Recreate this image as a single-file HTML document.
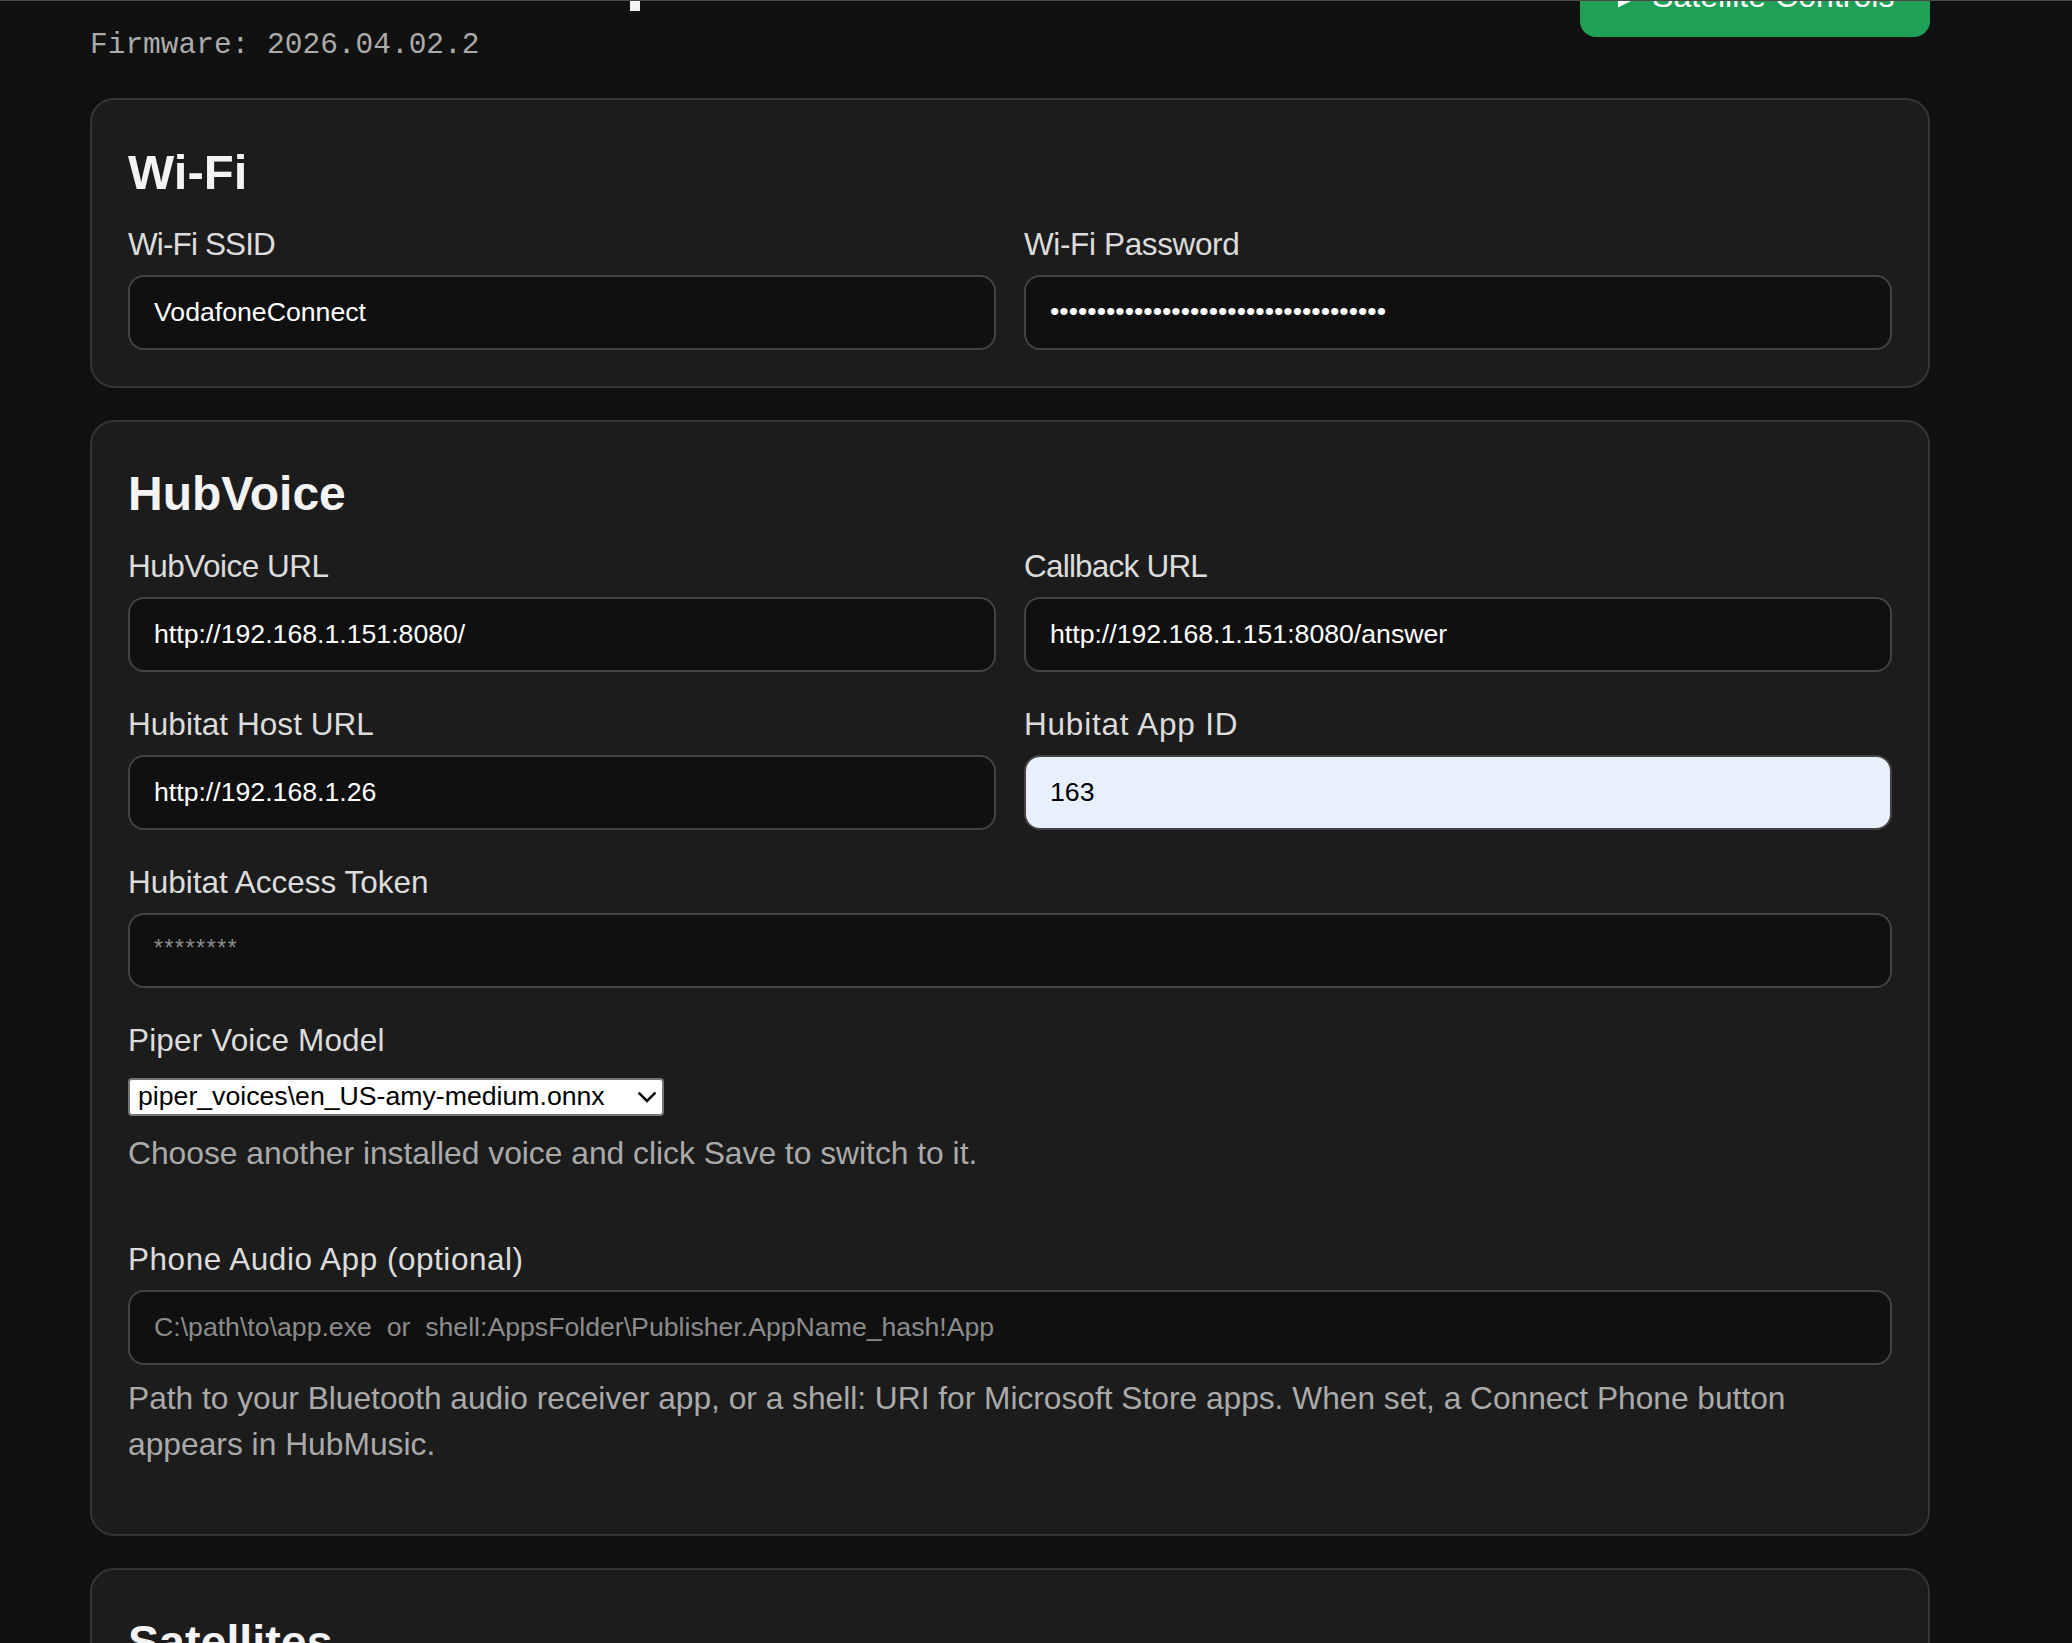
<!DOCTYPE html>
<html>
<head>
<meta charset="utf-8">
<style>
html,body{margin:0;padding:0;}
body{width:2072px;height:1643px;overflow:hidden;background:#111111;position:relative;font-family:"Liberation Sans",sans-serif;}
.a{position:absolute;white-space:nowrap;}
.topline{left:0;top:0;width:2072px;height:1px;background:#4a4a4a;z-index:10;}
.desc{left:630px;top:1px;width:10px;height:10px;background:#f3f3f3;}
.fw{left:90px;top:25px;font-family:"Liberation Mono",monospace;font-size:29.5px;line-height:40px;color:#ababab;}
.btn{left:1580px;top:-60px;width:350px;height:97px;background:#209f56;border-radius:16px;}
.btntxt{left:1652px;top:-24px;font-size:32.1px;line-height:40px;color:#fff;}
.card{left:90px;width:1836px;border:2px solid #353535;background:#1c1c1c;border-radius:24px;box-shadow:0 0 3px rgba(0,0,0,0.3);}
.h{font-weight:bold;font-size:47.5px;line-height:60px;color:#f3f3f3;}
.lbl{font-size:31.5px;line-height:40px;color:#dcdcdc;}
.inp{width:864px;height:71px;border:2px solid #434343;background:#101010;border-radius:16px;}
.inpw{width:1760px;}
.itx{font-size:26.67px;line-height:32px;color:#ffffff;}
.ph{color:#8c8c8c;}
.help{font-size:31.77px;line-height:46px;color:#aaaaaa;}
</style>
</head>
<body>
<div class="a topline"></div>
<div class="a desc"></div>
<div class="a fw">Firmware: 2026.04.02.2</div>
<div class="a btn"></div>
<svg class="a" style="left:1618px;top:-17.6px;" width="27" height="26" viewBox="0 0 27 26"><polygon points="0,0 25.5,12.75 0,25.5" fill="#fff"/></svg>
<div class="a btntxt">Satellite Controls</div>

<!-- Card 1 -->
<div class="a card" style="top:98px;height:286px;"></div>
<div class="a h" style="left:128px;top:142px;font-size:49px;">Wi-Fi</div>
<div class="a lbl" style="left:128px;top:224px;letter-spacing:-0.88px;">Wi-Fi SSID</div>
<div class="a lbl" style="left:1024px;top:224px;letter-spacing:-0.37px;">Wi-Fi Password</div>
<div class="a inp" style="left:128px;top:275px;"></div>
<div class="a inp" style="left:1024px;top:275px;"></div>
<div class="a itx" style="left:154px;top:296px;">VodafoneConnect</div>
<div class="a itx" style="left:1050px;top:295px;">&#8226;&#8226;&#8226;&#8226;&#8226;&#8226;&#8226;&#8226;&#8226;&#8226;&#8226;&#8226;&#8226;&#8226;&#8226;&#8226;&#8226;&#8226;&#8226;&#8226;&#8226;&#8226;&#8226;&#8226;&#8226;&#8226;&#8226;&#8226;&#8226;&#8226;&#8226;&#8226;&#8226;&#8226;&#8226;&#8226;</div>

<!-- Card 2 -->
<div class="a card" style="top:420px;height:1112px;"></div>
<div class="a h" style="left:128px;top:464px;font-size:48px;">HubVoice</div>
<div class="a lbl" style="left:128px;top:545.5px;letter-spacing:-0.5px;">HubVoice URL</div>
<div class="a lbl" style="left:1024px;top:545.5px;letter-spacing:-0.79px;">Callback URL</div>
<div class="a inp" style="left:128px;top:597px;"></div>
<div class="a inp" style="left:1024px;top:597px;"></div>
<div class="a itx" style="left:154px;top:618px;">http://192.168.1.151:8080/</div>
<div class="a itx" style="left:1050px;top:618px;">http://192.168.1.151:8080/answer</div>

<div class="a lbl" style="left:128px;top:704px;letter-spacing:0.05px;">Hubitat Host URL</div>
<div class="a lbl" style="left:1024px;top:704px;letter-spacing:0.8px;">Hubitat App ID</div>
<div class="a inp" style="left:128px;top:755px;"></div>
<div class="a inp" style="left:1024px;top:755px;background:#e8f0fe;"></div>
<div class="a itx" style="left:154px;top:776px;">http://192.168.1.26</div>
<div class="a itx" style="left:1050px;top:776px;color:#000;">163</div>

<div class="a lbl" style="left:128px;top:862px;">Hubitat Access Token</div>
<div class="a inp inpw" style="left:128px;top:913px;"></div>
<div class="a itx ph" style="left:154px;top:932px;font-size:23px;letter-spacing:1.6px;">********</div>

<div class="a lbl" style="left:128px;top:1020px;letter-spacing:0.16px;">Piper Voice Model</div>
<div class="a" style="left:128px;top:1078px;width:532px;height:34px;border:2px solid #767676;background:#fff;border-radius:4px;"></div>
<div class="a itx" style="left:138px;top:1080px;color:#000;">piper_voices\en_US-amy-medium.onnx</div>
<svg class="a" style="left:630px;top:1085px;" width="30" height="24" viewBox="0 0 30 24"><polyline points="8.6,7.6 17,16 25.4,7.6" fill="none" stroke="#000" stroke-width="2.5"/></svg>
<div class="a help" style="left:128px;top:1130px;">Choose another installed voice and click Save to switch to it.</div>

<div class="a lbl" style="left:128px;top:1239px;letter-spacing:0.53px;">Phone Audio App (optional)</div>
<div class="a inp inpw" style="left:128px;top:1290px;"></div>
<div class="a itx ph" style="left:154px;top:1311px;">C:\path\to\app.exe&nbsp; or&nbsp; shell:AppsFolder\Publisher.AppName_hash!App</div>
<div class="a help" style="left:128px;top:1375px;font-size:31.69px;">Path to your Bluetooth audio receiver app, or a shell: URI for Microsoft Store apps. When set, a Connect Phone button</div>
<div class="a help" style="left:128px;top:1421px;">appears in HubMusic.</div>

<!-- Card 3 -->
<div class="a card" style="top:1568px;height:200px;"></div>
<div class="a h" style="left:128px;top:1612px;font-size:46.6px;">Satellites</div>
</body>
</html>
